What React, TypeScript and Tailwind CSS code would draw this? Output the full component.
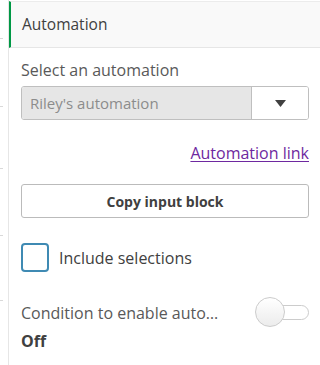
import React from "react";

export default function App() {
  const ticks = [38, 106, 168, 235, 300];
  return (
    <div
      className="w-[320px] h-[365px] bg-white flex overflow-hidden"
      style={{ fontFamily: "'Open Sans', 'Noto Sans', sans-serif" }}
    >
      {/* left gutter */}
      <div className="relative w-[9px] h-full border-r border-[#e6e6e6]">
        {ticks.map((t) => (
          <div key={t} className="absolute left-0 w-[3px] h-px bg-[#d9d9d9]" style={{ top: t }} />
        ))}
      </div>
      <div className="flex-1 flex flex-col">
        <div className="mt-[1px] border-t border-[#ececec] h-[47px] bg-[#f9f9f9] border-l-2 border-l-[#009845] border-b border-b-[#e6e6e6] flex items-center pl-[11px] text-[15.5px] text-[#404040]">
          Automation
        </div>
        <div className="pl-[12px] pr-[11px] flex flex-col">
          <div className="mt-[12px] h-[20px] leading-[20px] text-[16px] text-[#595959]">Select an automation</div>
          <div className="mt-[6px] h-[34px] flex border border-[#bfbfbf] rounded-[3px] overflow-hidden">
            <div className="flex-1 bg-[#e6e6e6] flex items-center pl-[8px] text-[15px] text-[#8c8c8c] border-r border-[#bfbfbf]">
              Riley's automation
            </div>
            <div className="w-[56px] bg-white flex items-center justify-center">
              <svg width="11" height="7" viewBox="0 0 11 7">
                <path d="M0 0 H11 L5.5 7 Z" fill="#404040" />
              </svg>
            </div>
          </div>
          <div className="mt-[23px] flex justify-end">
            <a href="#" className="text-[16px] leading-[20px] text-[#6e28a0] underline underline-offset-2">
              Automation link
            </a>
          </div>
          <button className="mt-[21px] h-[34px] border border-[#bbbbbb] rounded-[3px] bg-white text-[14px] font-bold text-[#404040]">
            Copy input block
          </button>
          <div className="mt-[25px] flex items-center">
            <div className="w-[28px] h-[29px] border-2 border-[#3f8ab3] rounded-[4px] bg-white" />
            <span className="ml-[10px] text-[16px] text-[#404040]">Include selections</span>
          </div>
          <div className="mt-[31px] flex items-start">
            <div className="flex flex-col w-[200px]">
              <div className="h-[20px] leading-[20px] text-[16px] text-[#595959] truncate">
                Condition to enable automation
              </div>
              <div className="mt-[8px] h-[20px] leading-[20px] text-[16px] font-bold text-[#404040]">Off</div>
            </div>
            <div className="relative ml-auto mt-[-6px] w-[54px] h-[30px] flex items-center">
              <div className="absolute right-0 left-[2px] h-[15px] rounded-full border border-[#cccccc] bg-white" />
              <div className="absolute left-0 top-0 w-[30px] h-[30px] rounded-full border border-[#cccccc] bg-gradient-to-b from-white to-[#ececec]" />
            </div>
          </div>
        </div>
      </div>
    </div>
  );
}
